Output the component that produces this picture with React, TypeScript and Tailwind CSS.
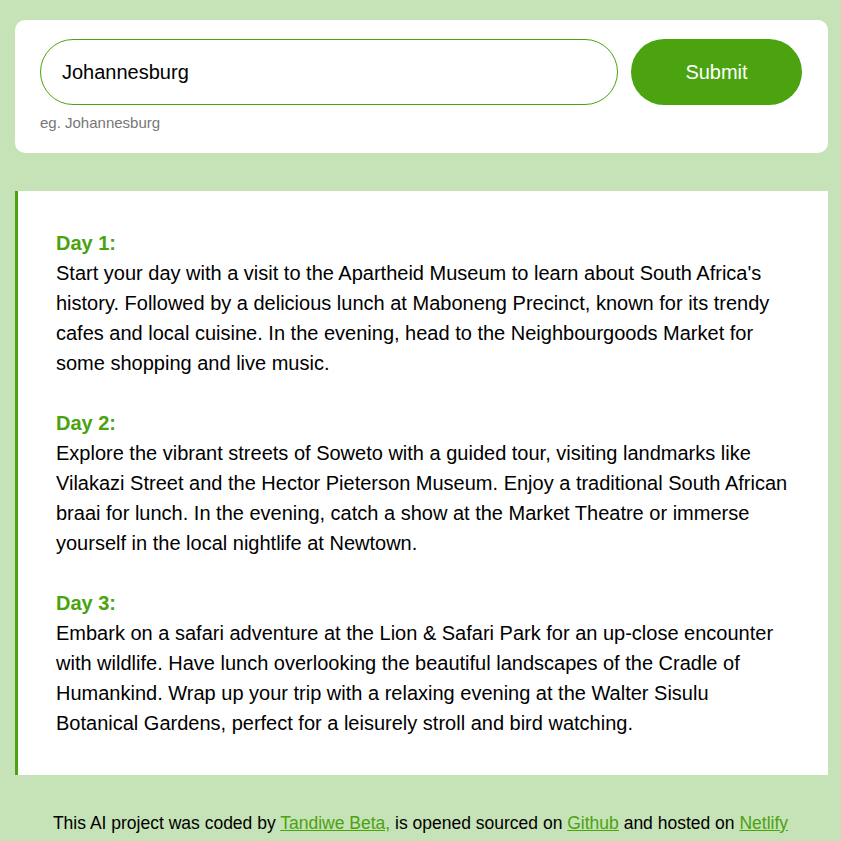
import React from "react";

const days = [
  {
    title: "Day 1:",
    text: "Start your day with a visit to the Apartheid Museum to learn about South Africa's history. Followed by a delicious lunch at Maboneng Precinct, known for its trendy cafes and local cuisine. In the evening, head to the Neighbourgoods Market for some shopping and live music.",
  },
  {
    title: "Day 2:",
    text: "Explore the vibrant streets of Soweto with a guided tour, visiting landmarks like Vilakazi Street and the Hector Pieterson Museum. Enjoy a traditional South African braai for lunch. In the evening, catch a show at the Market Theatre or immerse yourself in the local nightlife at Newtown.",
  },
  {
    title: "Day 3:",
    text: "Embark on a safari adventure at the Lion & Safari Park for an up-close encounter with wildlife. Have lunch overlooking the beautiful landscapes of the Cradle of Humankind. Wrap up your trip with a relaxing evening at the Walter Sisulu Botanical Gardens, perfect for a leisurely stroll and bird watching.",
  },
];

export default function App() {
  return (
    <div
      className="min-h-[841px] w-full bg-[#c6e2b7] pt-[20px]"
      style={{ fontFamily: '"Liberation Sans", Arial, sans-serif' }}
    >
      <div className="ml-[15px] w-[813px]">
        <div className="rounded-[10px] bg-white pl-[25px] pr-[26px] pt-[19px] pb-[21px]">
          <div className="flex items-center gap-[13px]">
            <div className="flex h-[66px] flex-1 items-center rounded-full border border-[#4aa30f] pl-[21px] text-[20px] text-black">
              Johannesburg
            </div>
            <button className="h-[66px] w-[171px] rounded-full bg-[#4aa30f] text-[20px] text-white">
              Submit
            </button>
          </div>
          <div className="mt-[9px] text-[15px] leading-[18px] text-[#777]">
            eg. Johannesburg
          </div>
        </div>

        <div className="mt-[38px] border-l-[3px] border-[#4aa30f] bg-white pl-[38px] pr-[36px] pt-[37px] pb-[37px] text-[20px] leading-[30px] text-black">
          {days.map((d, i) => (
            <div key={i} className={i > 0 ? "mt-[30px]" : ""}>
              <div className="font-bold text-[#4aa30f]">{d.title}</div>
              <div>{d.text}</div>
            </div>
          ))}
        </div>
      </div>

      <div className="mt-[38px] text-center text-[17.5px] leading-[20px] text-black">
        This AI project was coded by{" "}
        <a className="text-[#4aa30f] underline">Tandiwe Beta,</a> is opened
        sourced on <a className="text-[#4aa30f] underline">Github</a> and
        hosted on <a className="text-[#4aa30f] underline">Netlify</a>
      </div>
    </div>
  );
}
